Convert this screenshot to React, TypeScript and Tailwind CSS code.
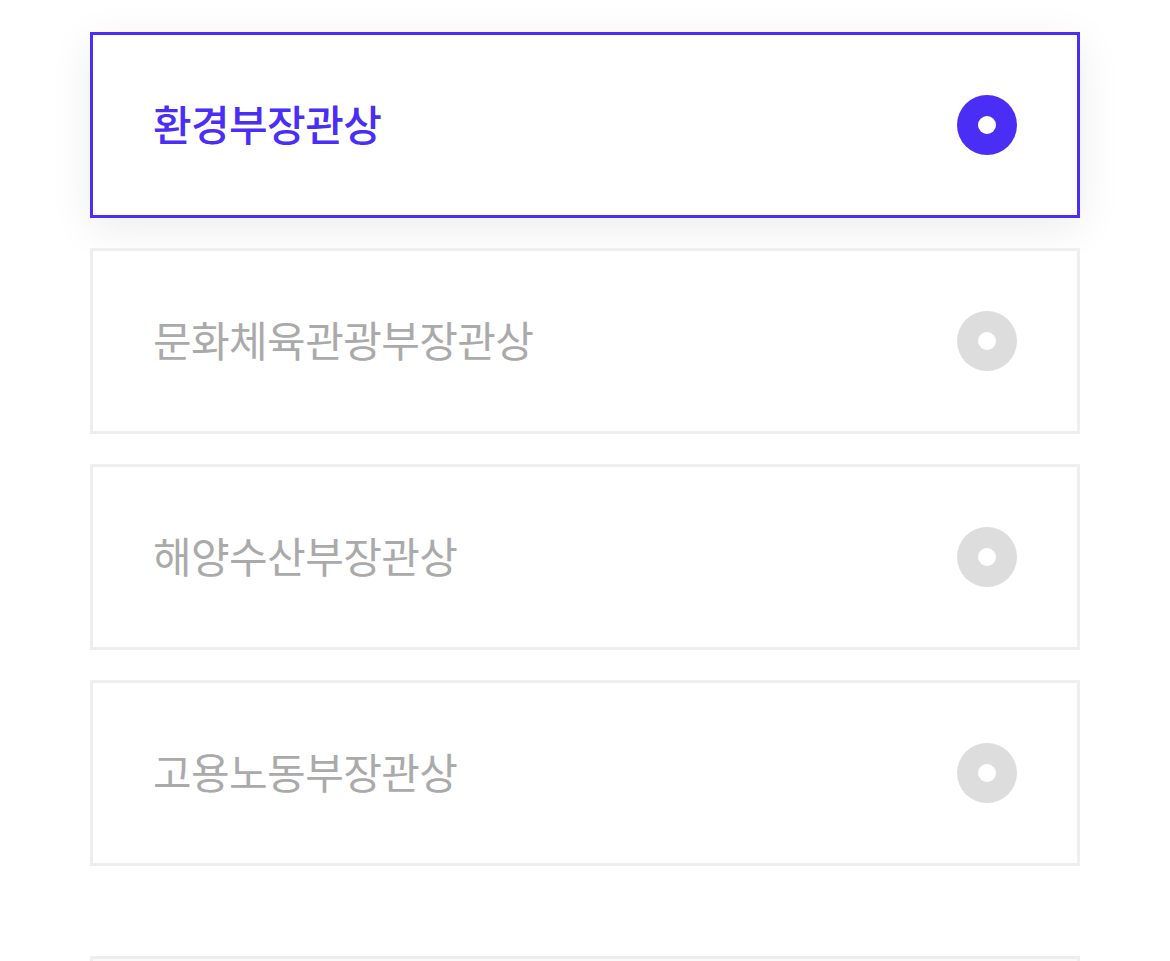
import { useState } from "react";

const options = ["환경부장관상", "문화체육관광부장관상", "해양수산부장관상", "고용노동부장관상"];

export default function App() {
  const [selected, setSelected] = useState(0);

  return (
    <div
      className="min-h-screen bg-white px-[90px] pt-[32px]"
      style={{ fontFamily: '"Noto Sans CJK KR", "Noto Sans", sans-serif' }}
    >
      <div className="flex flex-col gap-[30px]">
        {options.map((label, idx) => {
          const active = idx === selected;
          return (
            <button
              key={label}
              onClick={() => setSelected(idx)}
              className={`flex items-center justify-between p-[60px] border-[3px] bg-white text-left ${
                active
                  ? "border-[#4b2ef5] shadow-[0_10px_40px_rgba(0,0,0,0.08)]"
                  : "border-[#eeeeee]"
              }`}
            >
              <span
                className={`pb-[4px] text-[42px] leading-[56px] tracking-[-0.6px] ${
                  active ? "text-[#4b2ef5] font-medium" : "text-[#aaaaaa] font-normal"
                }`}
              >
                {label}
              </span>
              <span
                className={`flex items-center justify-center w-[60px] h-[60px] rounded-full ${
                  active ? "bg-[#4b2ef5]" : "bg-[#dddddd]"
                }`}
              >
                <span className="w-[18px] h-[18px] rounded-full bg-white" />
              </span>
            </button>
          );
        })}
      </div>

      {/* next section */}
      <div className="mt-[90px] h-[120px] border-[3px] border-[#eeeeee] bg-[#fafafa]" />
    </div>
  );
}
